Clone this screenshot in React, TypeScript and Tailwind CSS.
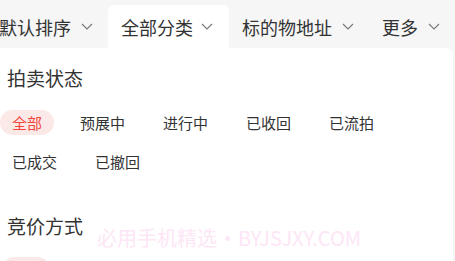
import React from "react";

const tabs = [
  { label: "默认排序", active: false },
  { label: "全部分类", active: true },
  { label: "标的物地址", active: false },
  { label: "更多", active: false },
];

const statusOptions = ["全部", "预展中", "进行中", "已收回", "已流拍", "已成交", "已撤回"];

function Chevron() {
  return (
    <svg width="12" height="7" viewBox="0 0 12 7" fill="none" className="shrink-0">
      <polyline points="1,1 6,6 11,1" stroke="#777" strokeWidth="1.1" />
    </svg>
  );
}

function Chip({ label, active }: { label: string; active?: boolean }) {
  return (
    <span
      className={
        active
          ? "h-[25px] whitespace-nowrap rounded-full bg-[#fbe9e8] px-3 text-[15px] leading-[25px] text-[#f2473a]"
          : "h-[25px] whitespace-nowrap rounded-full px-3 text-[15px] leading-[25px] text-[#333]"
      }
    >
      {label}
    </span>
  );
}

export default function App() {
  return (
    <div
      className="relative h-[261px] w-[455px] overflow-hidden bg-[#f6f6f6]"
      style={{ fontFamily: '"Noto Sans CJK SC", "Noto Sans", sans-serif' }}
    >
      {/* filter tabs */}
      <div className="ml-[-14px] flex h-[48px] items-end">
        {tabs.map((t) => (
          <div
            key={t.label}
            className={
              t.active
                ? "flex h-[43px] shrink-0 items-center gap-[8px] rounded-t-[6px] bg-white pl-[13px] pr-[16px]"
                : "flex h-[43px] shrink-0 items-center gap-[10px] pl-[13px] pr-[15px]"
            }
          >
            <span className="whitespace-nowrap text-[18px] leading-[26px] text-[#333]">{t.label}</span>
            <Chevron />
          </div>
        ))}
      </div>

      {/* dropdown panel */}
      <div className="mr-[2px] h-[213px] rounded-tr-[6px] bg-white">
        <div className="pl-[7px] pt-[17px] text-[19px] leading-[26px] text-[#333]">拍卖状态</div>
        <div className="mt-[19px] flex flex-wrap gap-x-[14px] gap-y-[14px]">
          {statusOptions.map((s, i) => (
            <Chip key={s} label={s} active={i === 0} />
          ))}
        </div>
        <div className="mt-[39px] pl-[7px] text-[19px] leading-[26px] text-[#333]">竞价方式</div>
        <div className="mt-[18px] flex gap-[14px] pl-[2px]">
          <span className="h-[25px] w-[48px] rounded-full bg-[#fbe9e8]" />
        </div>
      </div>

      {/* watermark */}
      <div className="pointer-events-none absolute left-[97px] top-[224px] flex items-center whitespace-nowrap text-[20px] leading-[28px] text-[#fde6f6]">
        <span>必用手机精选</span>
        <span className="mx-[8px] h-[5px] w-[5px] rounded-full bg-[#fde6f6]" />
        <span>BYJSJXY.COM</span>
      </div>
    </div>
  );
}
